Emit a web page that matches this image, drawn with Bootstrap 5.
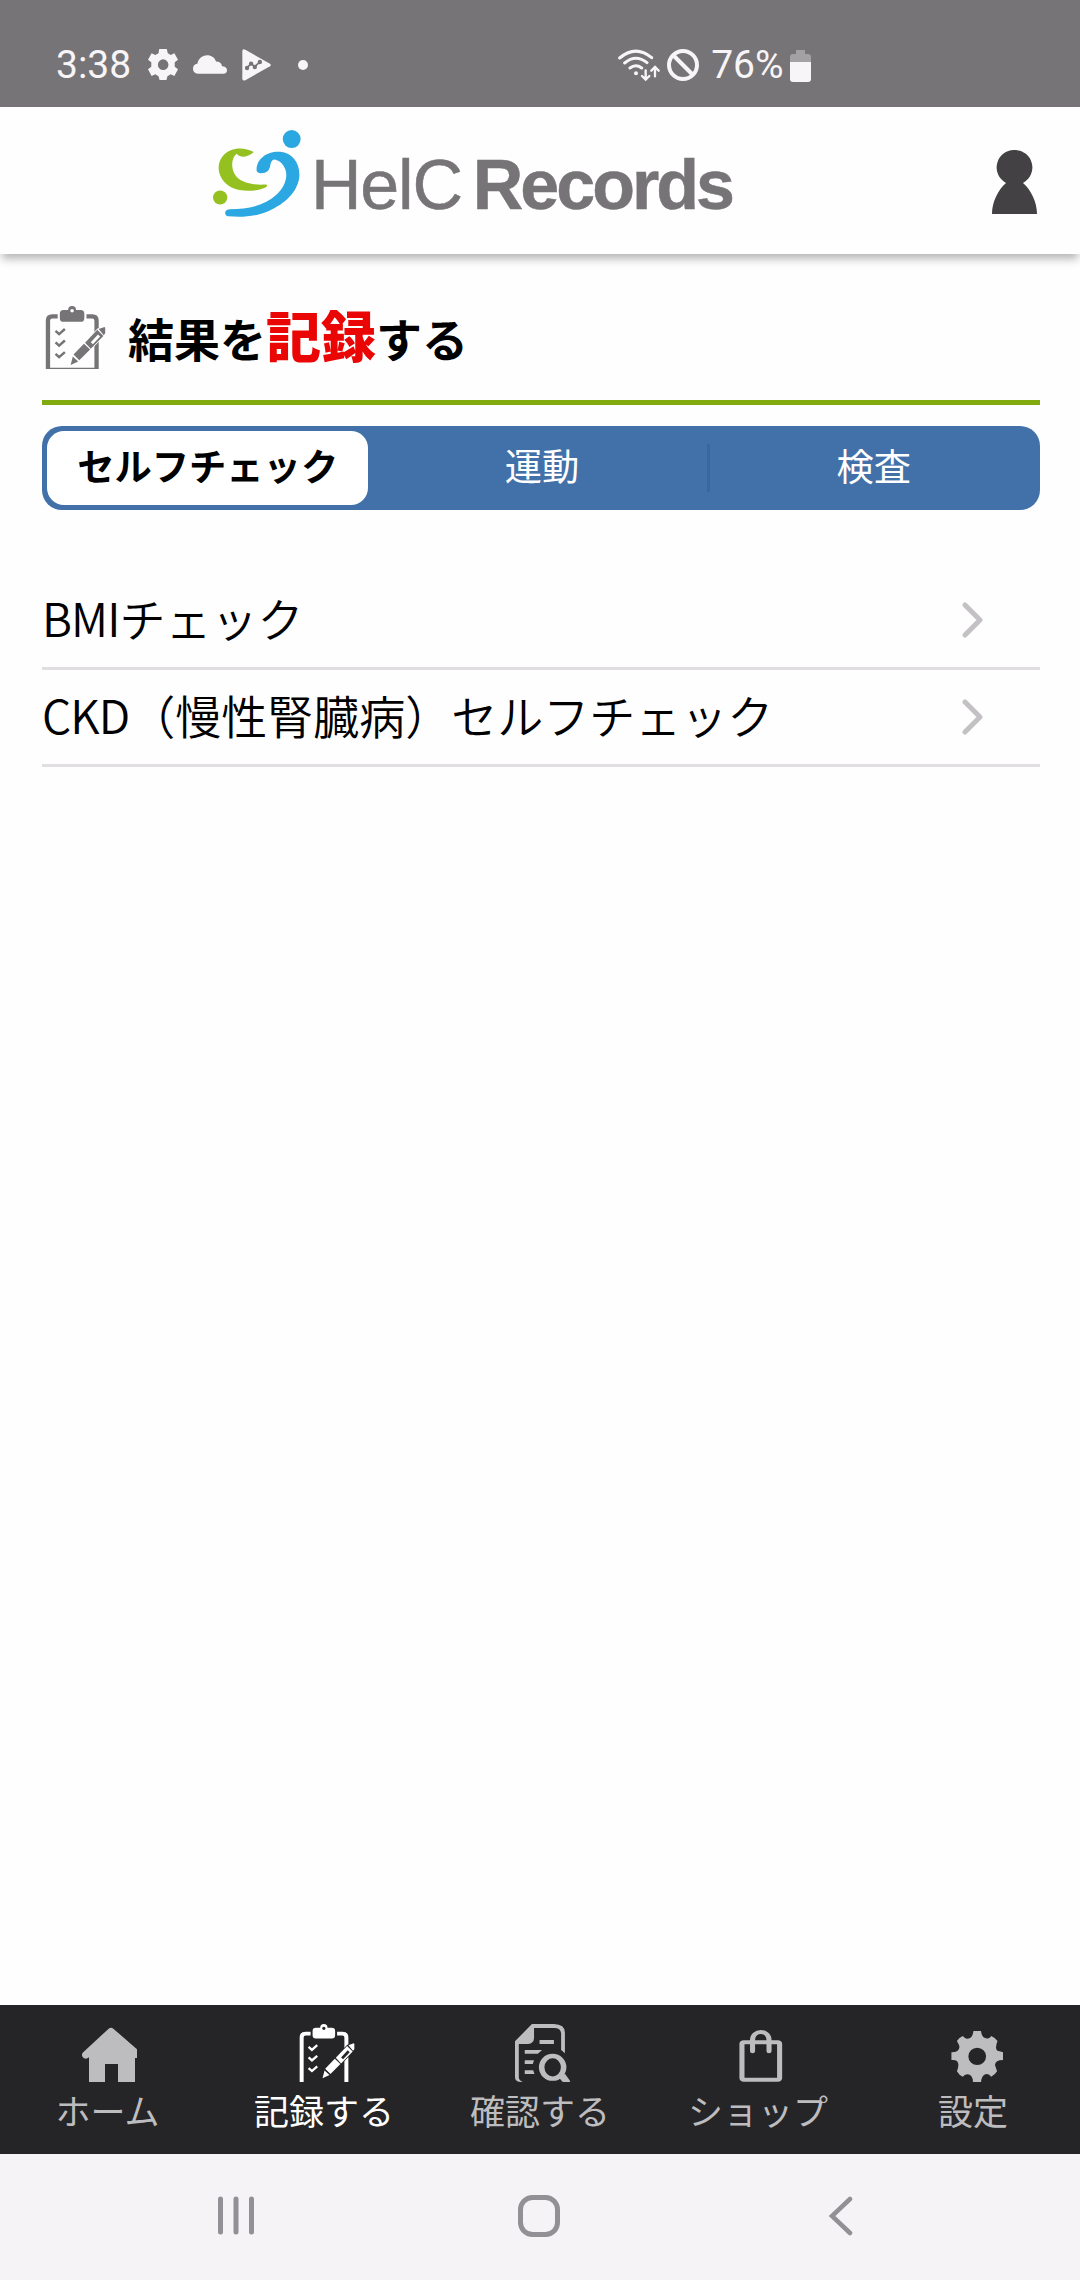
<!DOCTYPE html>
<html lang="ja">
<head>
<meta charset="utf-8">
<meta name="viewport" content="width=device-width, initial-scale=1">
<title>HelC Records</title>
<link href="https://cdn.jsdelivr.net/npm/bootstrap@5.3.0/dist/css/bootstrap.min.css" rel="stylesheet">
<style>
  body { width: 1080px; height: 2280px; background: #fefefe; color: #000; overflow: hidden;
    font-family: "Noto Sans CJK JP", "Noto Sans", sans-serif; }
  svg { display: block; flex: none; }
  .statusbar { height: 107px; background: #777477; color: #f7f5f8; padding: 22px 0 0 56px;
    font: 39px/1 Roboto, sans-serif; }
  .statusbar svg { fill: #f7f5f8; }
  .appbar { height: 147px; background: #fefefe; padding: 0 43px 0 213px; box-shadow: 0 7px 8px -2px rgba(60,55,65,.36); }
  .brand { color: #777477; font: 70px/1 "Liberation Sans", Arial, sans-serif; white-space: nowrap; }
  .brand span { margin-top: 9px; -webkit-text-stroke: .5px #777477; }
  .brand-a { letter-spacing: -1.2px; margin-left: 10px; }
  .brand-b { letter-spacing: -3px; margin-left: 11px; font-weight: 700; }
  .page { padding: 0 40px 0 42px; }
  .headline { height: 151px; border-bottom: 5px solid; border-image: linear-gradient(#9cc22d, #80aa0e) 1; padding: 52px 0 0 3px; }
  .headline h1 { font-size: 46px; font-weight: 700; line-height: 64px; margin: -5px 0 0 22px; white-space: nowrap; }
  .headline em { font-style: normal; font-size: 55px; color: #eb0606; font-weight: 900; line-height: 64px; }
  .segments { height: 84px; margin-top: 21px; padding: 5px; background: #4271a9; border-radius: 20px; }
  .segments .nav-link { height: 74px; padding: 0; color: #fff; font-size: 37.300px; line-height: 69px; border-radius: 17px; }
  .segments .nav-link.active { background: #fff; color: #000; font-weight: 700; }
  .seg-1 { width: 322px; } .seg-2 { width: 338px; padding-left: 8px !important; margin-left: 1px; } .seg-3 { width: 326px; padding-left: 3px !important; }
  .seg-rule { width: 3px; height: 48px; background: #3b679f; }
  .checks { margin-top: 63px; }
  .checks .list-group-item, .checks .list-group-item:last-child { height: 97px; padding: 0 57px 0 0; border: 0; border-bottom: 3px solid #e0dee1; background: none;
    color: #000; font-size: 46px; line-height: 88px; white-space: nowrap; font-weight: 350; }
  .checks .list-group-item > span { height: 94px; }
  .latin { letter-spacing: -.9px; }
  .tabs { height: 149px; background: #252527; padding-top: 19px; }
  .tabs a { width: 216px; color: #bdbcbf; font-size: 35px; line-height: 50px; text-decoration: none; }
  .tabs a.active { color: #fff; }
  .tabs span { margin-top: 3px; white-space: nowrap; }
  .sysnav { height: 126px; background: #f5f3f6; padding: 41px 0 0 217px; }
</style>
</head>
<body class="d-flex flex-column">
<svg width="0" height="0" class="position-absolute">
  <symbol id="clipboard" viewBox="895 101 169 175">
    <g fill="none" stroke="currentColor" stroke-width="12">
      <path d="M903 276V142Q903 130 915 130H930M1010 130H1026Q1038 130 1038 142V276"/>
      <path stroke-width="7" d="M924 170l10 9 16-14M924 202l10 9 16-14M924 234l10 9 16-14"/>
    </g>
    <path fill="currentColor" fill-rule="evenodd" d="M946 112H959A11 11 0 0 1 981 112H994Q1004 112 1004 122V135Q1004 145 994 145H946Q936 145 936 135V122Q936 112 946 112ZM965 114a5 5 0 1 0 10 0a5 5 0 1 0-10 0Z"/>
    <path fill="var(--gap)" stroke="var(--gap)" stroke-width="5" d="M967 264L974 237L1042 166L1061 160V180L990 252Z"/>
    <g fill="currentColor"><path d="M966 265L972 241L987 255ZM974 236L1003 206L1020 222L990 252ZM1044 165L1060 159Q1063 160 1062 164V177L1058 182Z"/>
    <path fill-rule="evenodd" d="M1006 203L1040 167L1057 184L1022 220ZM1022 202L1028 207L1048 186L1042 180Z"/></g>
  </symbol>
</svg>

<header class="statusbar d-flex align-items-center flex-shrink-0">
  <span style="margin-top:1px">3:38</span>
  <svg width="30" height="31" viewBox="442 90 91 93" style="margin-left:17px" preserveAspectRatio="none"><path fill-rule="evenodd" d="M476 90H499L502 103L511 108L522 103L533 122L523 130V143L533 151L522 171L511 166L501 172L498 183H477L474 172L464 166L453 171L442 151L452 143V130L442 122L453 103L464 108L474 103ZM472 137a16 16 0 1 0 32 0a16 16 0 1 0-32 0Z"/></svg>
  <svg width="34" height="19" viewBox="577 104 102 56" style="margin-left:15px"><path d="M592 160Q577 158 577 145Q577 132 590 130C597 95 640 98 646 123Q662 123 664 137Q679 138 679 149Q679 159 668 160Z"/></svg>
  <svg width="29" height="32" viewBox="726 90 86 94" style="margin-left:15px"><path d="M727 96Q727 87 736 92L809 133Q814 137 809 141L736 182Q727 186 727 178Z"/><g fill="#777477" stroke="#777477" stroke-width="5"><path fill="none" d="M741 145L753 133L764 142L779 128"/><circle cx="741" cy="146" r="4"/><circle cx="753" cy="133" r="4"/><circle cx="764" cy="143" r="4"/><circle cx="779" cy="128" r="4"/></g></svg>
  <svg width="10" height="10" viewBox="0 0 10 10" style="margin-left:27px"><circle cx="5" cy="5" r="5"/></svg>
  <svg width="42" height="34" viewBox="114 83 126 102" style="margin-left:310px"><g fill="none" stroke="#f7f5f8" stroke-width="9" stroke-linecap="round"><path d="M119 113Q167 72 215 112M134 128Q167 100 201 127M150 143Q167 130 185 143"/><path stroke-width="7" d="M197 150V176M186 167L197 178L208 167M225 168V142M214 151L225 140L236 151"/></g><circle cx="168" cy="159" r="6"/></svg>
  <svg width="32" height="32" viewBox="0 0 32 32" style="margin-left:7px"><g fill="none" stroke="#f7f5f8" stroke-width="4"><circle cx="16" cy="16" r="14"/><path d="M6 6L26 26"/></g></svg>
  <span style="margin:1px 0 0 12px">76%</span>
  <svg width="21" height="32" viewBox="0 0 21 32" style="margin:2px 0 0 6px"><path fill="#a3a1a4" d="M6 4V0H15V4H18Q21 4 21 7V14H0V7Q0 4 3 4Z"/><path d="M0 12H21V29Q21 32 18 32H3Q0 32 0 29Z"/></svg>
</header>

<nav class="appbar d-flex align-items-center justify-content-between flex-shrink-0">
  <div class="brand d-flex align-items-center">
    <svg width="88" height="87" viewBox="64 59 246 260" preserveAspectRatio="none" style="margin-top:-15px">
      <g fill="#94c11f"><ellipse cx="84" cy="261" rx="20" ry="21"/><path d="M178 125C150 108 113 110 92 136C68 167 81 211 116 231C147 247 192 241 212 230Q220 223 210 222C174 224 138 217 124 190C113 167 117 141 130 130Q137 139 149 139Q165 138 178 125Z"/></g>
      <g fill="#2ba7e1"><ellipse cx="284" cy="86" rx="25" ry="27"/><path d="M186 181C184 144 217 121 252 124C288 127 309 162 305 201C300 244 266 279 220 301C180 319 143 320 107 317Q98 315 98 307Q98 298 110 296C165 295 206 286 242 252C268 227 277 190 261 166Q253 151 237 147Q228 147 225 160Q223 182 209 187Q188 191 186 181Z"/></g>
    </svg>
    <span class="brand-a">HelC</span><span class="brand-b">Records</span>
  </div>
  <svg width="45" height="64" viewBox="0 0 45 64" style="margin-top:3px"><path fill="#434143" d="M22.500 0A17.500 17.500 0 0 1 31 33C39 40 45 52 45 64H0C0 52 6 40 14 33A17.500 17.500 0 0 1 22.500 0Z"/></svg>
</nav>

<main class="page flex-grow-1">
  <div class="headline d-flex align-items-start">
    <div style="color:#777477;--gap:#fefefe"><svg width="61" height="63" viewBox="0 0 61 63"><use href="#clipboard" width="61" height="63"/><path d="M1 62.500H53" stroke="#777477" stroke-width="1.500"/></svg></div>
    <h1>結果を<em>記録</em>する</h1>
  </div>
  <div class="segments nav nav-pills flex-nowrap align-items-center">
    <a class="nav-link active seg-1 text-center">セルフチェック</a>
    <a class="nav-link seg-2 text-center">運動</a>
    <i class="seg-rule"></i>
    <a class="nav-link seg-3 text-center">検査</a>
  </div>
  <div class="checks list-group list-group-flush">
    <a class="list-group-item d-flex align-items-center justify-content-between"><span><span class="latin">BMI</span>チェック</span>
      <svg width="21" height="36" viewBox="0 0 21 36"><path d="M3 3L18 18L3 33" fill="none" stroke="#c3c1c4" stroke-width="5" stroke-linecap="round" stroke-linejoin="round"/></svg></a>
    <a class="list-group-item d-flex align-items-center justify-content-between"><span><span class="latin">CKD</span>（慢性腎臓病）セルフチェック</span>
      <svg width="21" height="36" viewBox="0 0 21 36"><path d="M3 3L18 18L3 33" fill="none" stroke="#c3c1c4" stroke-width="5" stroke-linecap="round" stroke-linejoin="round"/></svg></a>
  </div>
</main>

<nav class="tabs d-flex flex-shrink-0">
  <a class="d-flex flex-column align-items-center">
    <svg width="57" height="58" viewBox="243 102 171 174" style="margin-left:3px"><path fill="currentColor" d="M326 116Q333 111 340 116L411 178V204H405V276H354V222H315V276H267V202Q260 208 252 205Q242 198 248 188Z"/></svg><span style="margin-left:-1px">ホーム</span></a>
  <a class="active d-flex flex-column align-items-center" style="--gap:#252527">
    <svg width="56" height="58" style="margin-left:5px"><use href="#clipboard" width="56" height="58"/></svg><span>記録する</span></a>
  <a class="d-flex flex-column align-items-center">
    <svg width="55" height="58" viewBox="226 102 130 174" preserveAspectRatio="none" style="margin-left:5px"><path fill="currentColor" fill-rule="evenodd" d="M266 102H318Q344 103 344 128V190L335 180V130Q334 114 318 114H271V145Q270 161 257 162H235V262Q235 272 245 276H238Q226 275 226 262V154ZM284 150H318V162H284ZM249 180H290L280 191H249ZM249 211H271L268 222H249ZM249 241H269L272 252H249Z"/><ellipse cx="315" cy="232" rx="26" ry="34" fill="none" stroke="currentColor" stroke-width="13"/><path fill="currentColor" d="M331 265L344 251L356 272V276H339Z"/></svg><span>確認する</span></a>
  <a class="d-flex flex-column align-items-center">
    <svg width="44" height="58" viewBox="758 102 104 174" preserveAspectRatio="none" style="margin-left:9px"><g fill="none" stroke="currentColor" stroke-width="12"><rect x="765" y="157" width="89" height="112" rx="4"/><path stroke-linecap="round" d="M790 184V150C790 118 829 118 829 150V184"/></g></svg><span style="margin-left:4px">ショップ</span></a>
  <a class="d-flex flex-column align-items-center">
    <svg width="52" height="58" viewBox="1262 102 123 174" preserveAspectRatio="none" style="margin-left:10px"><path fill="currentColor" fill-rule="evenodd" d="M1315 123H1333Q1335 148 1351 145Q1355 143 1357 138Q1366 142 1372 153Q1363 182 1377 184L1385 187V210Q1367 210 1366 225L1371 244Q1366 255 1357 260Q1353 253 1347 252Q1335 252 1333 276H1314Q1313 252 1300 253Q1294 254 1290 260Q1281 256 1276 244Q1283 222 1276 213Q1272 209 1263 210V187Q1286 186 1281 165L1276 153Q1281 142 1290 138Q1294 145 1299 146Q1313 148 1315 123ZM1303 199a21 26 0 1 0 42 0a21 26 0 1 0-42 0Z"/></svg><span style="margin-left:2px">設定</span></a>
</nav>

<footer class="sysnav d-flex align-items-start flex-shrink-0">
  <svg width="38" height="42" viewBox="0 0 38 42"><path d="M3.500 4V37M19 4V37M34.500 4V37" stroke="#929094" stroke-width="5" stroke-linecap="round"/></svg>
  <svg width="42" height="42" viewBox="0 0 42 42" style="margin-left:263px"><rect x="2.500" y="2.500" width="37" height="37" rx="12" fill="none" stroke="#929094" stroke-width="5"/></svg>
  <svg width="25" height="42" viewBox="0 0 25 42" style="margin-left:268px"><path d="M22 4L4 21L22 38" fill="none" stroke="#929094" stroke-width="4.500" stroke-linecap="round"/></svg>
</footer>
<script src="https://cdn.jsdelivr.net/npm/bootstrap@5.3.0/dist/js/bootstrap.bundle.min.js"></script>
</body>
</html>
